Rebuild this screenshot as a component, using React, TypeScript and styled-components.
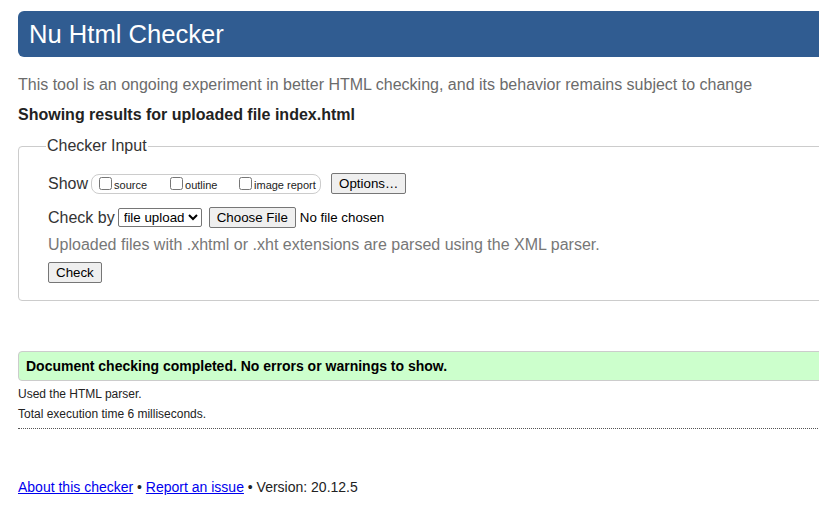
import React from "react";
import styled, { createGlobalStyle } from "styled-components";

const Global = createGlobalStyle`
  html, body { margin: 0; padding: 0; overflow: hidden; background: #fff; }
  body { font-family: "Liberation Sans", Arial, sans-serif; color: #222; }
`;

const Page = styled.div`
  width: 900px;
  padding: 11px 0 0 18px;
`;

const Header = styled.h1`
  margin: 0;
  height: 46px;
  background: #305c91;
  border-radius: 6px;
  color: #fff;
  font-weight: normal;
  font-size: 25.6px;
  line-height: 46px;
  padding-left: 11px;
`;

const Intro = styled.p`
  margin: 18px 0 0;
  font-size: 16px;
  line-height: 20px;
  color: #6b6b6b;
`;

const Results = styled.p`
  margin: 10px 0 0;
  font-size: 16px;
  line-height: 20px;
  font-weight: bold;
  color: #222;
`;

const Fieldset = styled.fieldset`
  margin: 12px 0 0;
  padding: 18px 29px 17px 29px;
  border: 1px solid #ccc;
  border-radius: 4px;
  min-width: 0;
`;

const Legend = styled.legend`
  margin-left: -2px;
  padding: 0 1px;
  font-size: 16px;
  color: #333;
`;

const Row = styled.div<{ $mt?: number }>`
  display: flex;
  align-items: center;
  margin-top: ${(p) => p.$mt ?? 0}px;
  font-size: 16px;
  color: #333;
`;

const RowLabel = styled.span`
  margin-right: 3px;
`;

const CheckGroup = styled.span`
  display: inline-flex;
  align-items: center;
  height: 18px;
  border: 1px solid #ccc;
  border-radius: 8px;
  padding: 0 3px 0 5px;
  margin-right: 10px;
`;

const CheckItem = styled.label<{ $w: number }>`
  display: inline-flex;
  align-items: center;
  width: ${(p) => p.$w}px;
  font-size: 11px;
  color: #222;
  padding-top: 2px;
`;

const Box = styled.input`
  margin: -3px 2px 0 2px;
  width: 13px;
  height: 13px;
`;

const Button = styled.button`
  font-family: "Liberation Sans", Arial, sans-serif;
  font-size: 13.33px;
  color: #000;
  background: #efefef;
  border: 1px solid #767676;
  border-radius: 2px;
  height: 21px;
  padding: 1px 7px;
  line-height: 16px;
`;

const Select = styled.select`
  font-family: "Liberation Sans", Arial, sans-serif;
  font-size: 13.33px;
  color: #000;
  background: #fff;
  border: 1px solid #767676;
  border-radius: 2px;
  height: 19px;
  padding: 0 0 0 1px;
  margin-right: 7px;
`;

const FileName = styled.span`
  font-size: 13.33px;
  color: #000;
  margin-left: 4px;
`;

const Hint = styled.p`
  margin: 7px 0 0;
  font-size: 16px;
  line-height: 20px;
  color: #777;
`;

const Success = styled.div`
  margin-top: 50px;
  height: 28px;
  background: #ccffcc;
  border: 1px solid #ccc;
  border-radius: 4px 0 0 4px;
  padding-left: 7px;
  font-size: 14px;
  font-weight: bold;
  color: #000;
  line-height: 28px;
`;

const Note = styled.p<{ $mt: number }>`
  margin: ${(p) => p.$mt}px 0 0;
  font-size: 12px;
  line-height: 14px;
  color: #222;
`;

const Dotted = styled.hr`
  margin: 7px 0 0;
  border: none;
  border-top: 1px dotted #555;
  height: 0;
`;

const Footer = styled.p`
  margin: 50px 0 0;
  font-size: 14px;
  line-height: 16px;
  color: #222;
`;

const Link = styled.a`
  color: #00e;
  text-decoration: underline;
`;

export default function App() {
  return (
    <>
      <Global />
      <Page>
        <Header>Nu Html Checker</Header>
        <Intro>
          This tool is an ongoing experiment in better HTML checking, and its behavior remains subject to change
        </Intro>
        <Results>Showing results for uploaded file index.html</Results>
        <Fieldset>
          <Legend>Checker Input</Legend>
          <Row>
            <RowLabel>Show</RowLabel>
            <CheckGroup>
              <CheckItem $w={71}>
                <Box type="checkbox" />
                source
              </CheckItem>
              <CheckItem $w={69}>
                <Box type="checkbox" />
                outline
              </CheckItem>
              <CheckItem $w={80}>
                <Box type="checkbox" />
                image report
              </CheckItem>
            </CheckGroup>
            <Button>Options…</Button>
          </Row>
          <Row $mt={13}>
            <RowLabel>Check by</RowLabel>
            <Select defaultValue="upload">
              <option value="upload">file upload</option>
            </Select>
            <Button>Choose File</Button>
            <FileName>No file chosen</FileName>
          </Row>
          <Hint>Uploaded files with .xhtml or .xht extensions are parsed using the XML parser.</Hint>
          <Row $mt={7}>
            <Button>Check</Button>
          </Row>
        </Fieldset>
        <Success>Document checking completed. No errors or warnings to show.</Success>
        <Note $mt={6}>Used the HTML parser.</Note>
        <Note $mt={6}>Total execution time 6 milliseconds.</Note>
        <Dotted />
        <Footer>
          <Link href="#">About this checker</Link> • <Link href="#">Report an issue</Link> • Version: 20.12.5
        </Footer>
      </Page>
    </>
  );
}
